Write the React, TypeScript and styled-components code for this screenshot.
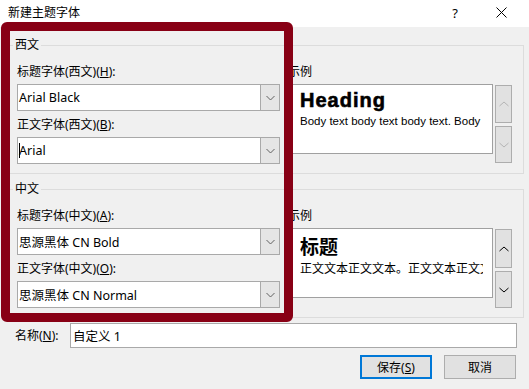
import React from "react";
import styled, { createGlobalStyle } from "styled-components";

const GlobalStyle = createGlobalStyle`
  html, body { margin: 0; padding: 0; }
  body {
    width: 529px;
    height: 389px;
    overflow: hidden;
    background: #f0f0f0;
    font-family: "Noto Sans", "Noto Sans CJK SC", sans-serif;
    font-size: 12px;
    color: #000;
  }
  * { box-sizing: border-box; }
`;

const Window = styled.div`
  position: relative;
  width: 529px;
  height: 389px;
  background: #f0f0f0;
  display: flex;
  flex-direction: column;
`;

const TitleBar = styled.div`
  height: 27px;
  flex: none;
  background: #fff;
  display: flex;
  align-items: center;
  padding-left: 8px;
`;

const Title = styled.div`
  flex: 1;
  font-size: 12px;
  line-height: 16px;
  margin-top: -2px;
`;

const TitleButton = styled.div<{ $last?: boolean }>`
  width: 28px;
  height: 27px;
  display: flex;
  align-items: center;
  justify-content: center;
  font-family: "Noto Sans", sans-serif;
  font-size: 13px;
  margin-right: ${(p) => (p.$last ? "14px" : "18px")};
  margin-top: -2px;
`;

const Body = styled.div`
  flex: 1;
  display: flex;
  flex-direction: column;
  padding: 10px 5px 0 8px;
`;

const GroupBox = styled.fieldset<{ $spaced?: boolean }>`
  margin: ${(p) => (p.$spaced ? "7px" : "0")} 0 0 0;
  padding: 11px 11px 9px 8px;
  border: 1px solid #dcdcdc;
  min-width: 0;
`;

const Legend = styled.legend`
  padding: 0 2px;
  margin-left: -4px;
  font-size: 12px;
  line-height: 16px;
`;

const GroupGrid = styled.div`
  display: grid;
  grid-template-columns: 263px 1fr;
  column-gap: 8px;
`;

const Column = styled.div`
  display: flex;
  flex-direction: column;
  min-width: 0;
`;

const Field = styled.div<{ $gap?: boolean }>`
  display: flex;
  flex-direction: column;
  margin-top: ${(p) => (p.$gap ? "6px" : "0")};
`;

const FieldLabel = styled.div`
  height: 16px;
  line-height: 16px;
  margin-bottom: 4px;
  white-space: nowrap;
`;

const Combo = styled.div`
  height: 27px;
  border: 1px solid #a9a9a9;
  background: #fff;
  display: flex;
`;

const ComboText = styled.div`
  flex: 1;
  display: flex;
  align-items: center;
  padding-left: 1px;
  font-size: 12.5px;
  white-space: nowrap;
  overflow: hidden;
`;

const Caret = styled.span`
  display: inline-block;
  width: 1px;
  height: 15px;
  background: #000;
  margin-right: -1px;
`;

const DropButton = styled.div`
  width: 19px;
  background: #e5e5e5;
  border-left: 1px solid #a9a9a9;
  display: flex;
  align-items: center;
  justify-content: center;
`;

const SampleRow = styled.div`
  display: flex;
  gap: 2px;
`;

const SampleBox = styled.div`
  flex: 1;
  min-width: 0;
  height: 70px;
  border: 1px solid #a0a0a0;
  background: #fff;
  padding: 4px 9px 0 11px;
`;

const SampleClip = styled.div`
  overflow: hidden;
  white-space: nowrap;
`;

const SampleHeading = styled.div<{ $cjk?: boolean }>`
  font-family: ${(p) =>
    p.$cjk ? '"Noto Sans CJK SC", sans-serif' : '"Liberation Sans", Arial, sans-serif'};
  font-weight: ${(p) => (p.$cjk ? 700 : 900)};
  font-size: ${(p) => (p.$cjk ? "19px" : "20px")};
  line-height: ${(p) => (p.$cjk ? "25px" : "22px")};
  letter-spacing: ${(p) => (p.$cjk ? "0" : "1px")};
  -webkit-text-stroke: ${(p) => (p.$cjk ? "0" : "0.6px #000")};
  margin-bottom: 3px;
`;

const SampleBody = styled.div<{ $cjk?: boolean }>`
  font-family: ${(p) =>
    p.$cjk ? '"Noto Sans CJK SC", sans-serif' : '"Liberation Sans", Arial, sans-serif'};
  font-size: ${(p) => (p.$cjk ? "12px" : "11.5px")};
  line-height: 14px;
`;

const Spinner = styled.div`
  display: flex;
  flex-direction: column;
  gap: 3px;
  margin-top: 1px;
  width: 17px;
`;

const SpinButton = styled.div<{ $h: number }>`
  height: ${(p) => p.$h}px;
  border: 1px solid #adadad;
  background: #e1e1e1;
  display: flex;
  align-items: center;
  justify-content: center;
`;

const NameRow = styled.div`
  display: flex;
  align-items: center;
  margin: 5px 7px 0 7px;
`;

const NameLabel = styled.div`
  width: 55px;
  flex: none;
  line-height: 16px;
`;

const NameInput = styled.div`
  flex: 1;
  height: 25px;
  border: 1px solid #a9a9a9;
  background: #fff;
  display: flex;
  align-items: center;
  padding-left: 2px;
  font-size: 12.5px;
`;

const ButtonRow = styled.div`
  display: flex;
  justify-content: flex-end;
  gap: 12px;
  margin: 7px 8px 0 0;
`;

const DialogButton = styled.div<{ $primary?: boolean }>`
  width: 72px;
  height: 24px;
  background: #e1e1e1;
  border: ${(p) => (p.$primary ? "2px solid #0078d7" : "1px solid #adadad")};
  display: flex;
  align-items: center;
  justify-content: center;
  font-size: 12px;
`;

const Highlight = styled.div`
  position: absolute;
  left: 1px;
  top: 22px;
  width: 292px;
  height: 300px;
  border: 9px solid #880015;
  border-radius: 6px;
  pointer-events: none;
`;

const ChevronDown = ({ color = "#606060", w = 8 }: { color?: string; w?: number }) => (
  <svg width={w + 1} height={6} viewBox={`0 0 ${w + 1} 6`}>
    <polyline points={`0.5,1 ${(w + 1) / 2},${5} ${w + 0.5},1`} fill="none" stroke={color} strokeWidth="1" />
  </svg>
);

const ChevronUp = ({ color = "#606060", w = 8 }: { color?: string; w?: number }) => (
  <svg width={w + 1} height={6} viewBox={`0 0 ${w + 1} 6`}>
    <polyline points={`0.5,5 ${(w + 1) / 2},1 ${w + 0.5},5`} fill="none" stroke={color} strokeWidth="1" />
  </svg>
);

const CloseIcon = () => (
  <svg width="11" height="11" viewBox="0 0 11 11">
    <path d="M0.5 0.5 L10.5 10.5 M10.5 0.5 L0.5 10.5" stroke="#000" strokeWidth="1" />
  </svg>
);

type FontField = { label: string; key: string; value: string; caret?: boolean };

const FontCombo = ({ f, gap }: { f: FontField; gap?: boolean }) => {
  const idx = f.label.lastIndexOf("(");
  const before = f.label.slice(0, idx + 1);
  const after = f.label.slice(idx + 2);
  return (
    <Field $gap={gap}>
      <FieldLabel>
        {before}
        <u>{f.key}</u>
        {after}
      </FieldLabel>
      <Combo>
        <ComboText>
          {f.caret && <Caret />}
          {f.value}
        </ComboText>
        <DropButton>
          <ChevronDown />
        </DropButton>
      </Combo>
    </Field>
  );
};

const Sample = ({ cjk, heading, body, active }: { cjk?: boolean; heading: string; body: string; active?: boolean }) => (
  <Column>
    <FieldLabel>示例</FieldLabel>
    <SampleRow>
      <SampleBox>
        <SampleClip>
          <SampleHeading $cjk={cjk}>{heading}</SampleHeading>
          <SampleBody $cjk={cjk}>{body}</SampleBody>
        </SampleClip>
      </SampleBox>
      <Spinner>
        <SpinButton $h={cjk ? 39 : 38}>
          <ChevronUp color={active ? "#000" : "#b4b4b4"} w={9} />
        </SpinButton>
        <SpinButton $h={37}>
          <ChevronDown color={active ? "#000" : "#b4b4b4"} w={9} />
        </SpinButton>
      </Spinner>
    </SampleRow>
  </Column>
);

export default function App() {
  return (
    <>
      <GlobalStyle />
      <Window>
        <TitleBar>
          <Title>新建主题字体</Title>
          <TitleButton>?</TitleButton>
          <TitleButton $last>
            <CloseIcon />
          </TitleButton>
        </TitleBar>
        <Body>
          <GroupBox>
            <Legend>西文</Legend>
            <GroupGrid>
              <Column>
                <FontCombo f={{ label: "标题字体(西文)(H):", key: "H", value: "Arial Black" }} />
                <FontCombo gap f={{ label: "正文字体(西文)(B):", key: "B", value: "Arial", caret: true }} />
              </Column>
              <Sample heading="Heading" body="Body text body text body text. Body" />
            </GroupGrid>
          </GroupBox>
          <GroupBox $spaced>
            <Legend>中文</Legend>
            <GroupGrid>
              <Column>
                <FontCombo f={{ label: "标题字体(中文)(A):", key: "A", value: "思源黑体 CN Bold" }} />
                <FontCombo gap f={{ label: "正文字体(中文)(O):", key: "O", value: "思源黑体 CN Normal" }} />
              </Column>
              <Sample cjk active heading="标题" body="正文文本正文文本。正文文本正文文本。" />
            </GroupGrid>
          </GroupBox>
          <NameRow>
            <NameLabel>
              名称(<u>N</u>):
            </NameLabel>
            <NameInput>自定义 1</NameInput>
          </NameRow>
          <ButtonRow>
            <DialogButton $primary>
              保存(<u>S</u>)
            </DialogButton>
            <DialogButton>取消</DialogButton>
          </ButtonRow>
        </Body>
        <Highlight />
      </Window>
    </>
  );
}
